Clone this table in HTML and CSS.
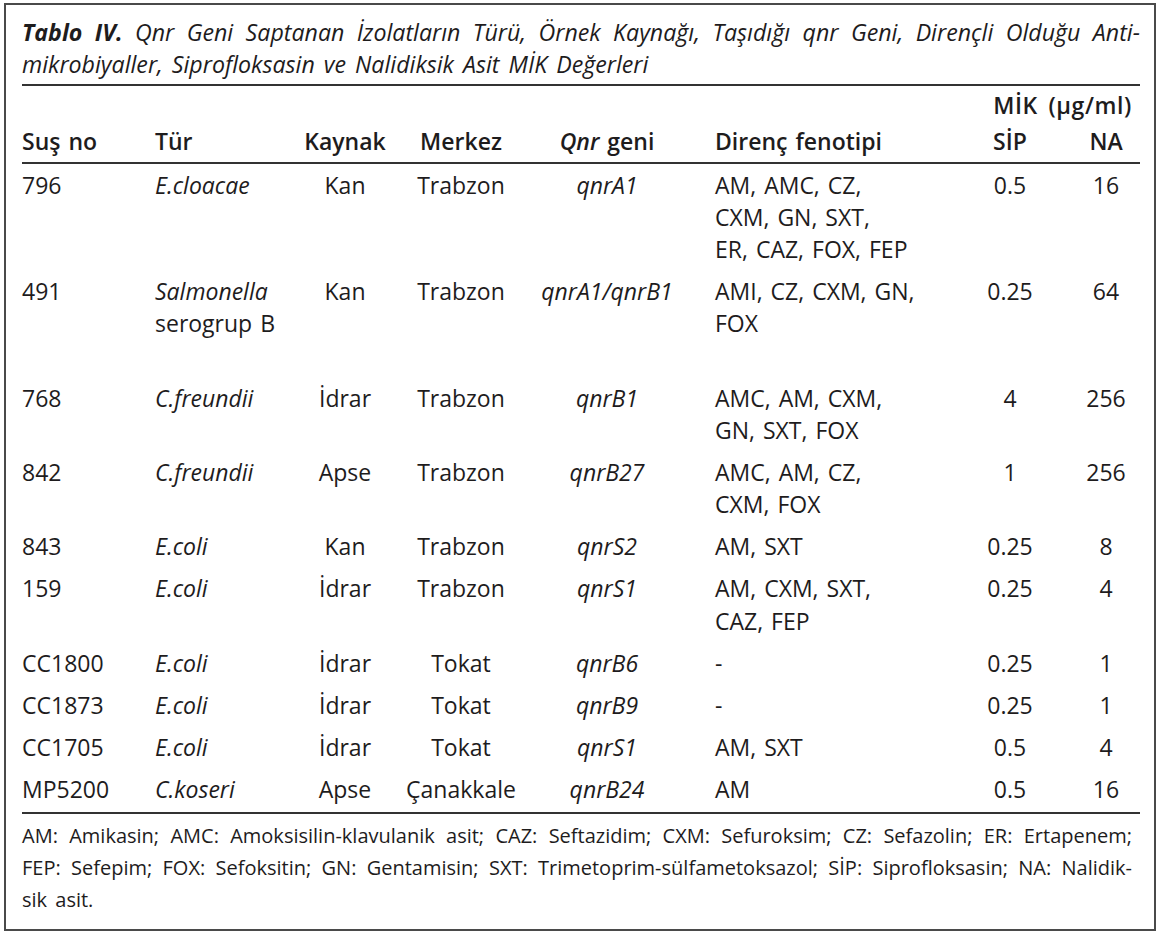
FILE: index.html
```html
<!DOCTYPE html>
<html lang="tr">
<head>
<meta charset="utf-8">
<title>Tablo IV</title>
<link rel="stylesheet" href="styles.css">
</head>
<body>
<div class="frame">
  <div class="caption">
    <span class="cline just"><b>Tablo IV.</b> Qnr Geni Saptanan İzolatların Türü, Örnek Kaynağı, Taşıdığı qnr Geni, Dirençli Olduğu Anti-</span>
    <span class="cline">mikrobiyaller, Siprofloksasin ve Nalidiksik Asit MİK Değerleri</span>
  </div>
  <table class="data">
    <colgroup>
      <col class="c1"><col class="c2"><col class="c3"><col class="c4"><col class="c5"><col class="c6"><col class="c7"><col class="c8">
    </colgroup>
    <thead>
      <tr class="h1">
        <th colspan="6"></th>
        <th colspan="2" class="mik">MİK (μg/ml)</th>
      </tr>
      <tr class="h2">
        <th class="l">Suş no</th>
        <th class="l">Tür</th>
        <th>Kaynak</th>
        <th>Merkez</th>
        <th><i>Qnr</i> geni</th>
        <th class="l ind">Direnç fenotipi</th>
        <th>SİP</th>
        <th>NA</th>
      </tr>
    </thead>
    <tbody>
      <tr>
        <td class="l">796</td><td class="l"><i>E.cloacae</i></td><td>Kan</td><td>Trabzon</td><td><i>qnrA1</i></td>
        <td class="l ind">AM, AMC, CZ,<br>CXM, GN, SXT,<br>ER, CAZ, FOX, FEP</td><td>0.5</td><td>16</td>
      </tr>
      <tr class="tall">
        <td class="l">491</td><td class="l"><i>Salmonella</i><br>serogrup B</td><td>Kan</td><td>Trabzon</td><td><i>qnrA1/qnrB1</i></td>
        <td class="l ind">AMI, CZ, CXM, GN,<br>FOX</td><td>0.25</td><td>64</td>
      </tr>
      <tr>
        <td class="l">768</td><td class="l"><i>C.freundii</i></td><td>İdrar</td><td>Trabzon</td><td><i>qnrB1</i></td>
        <td class="l ind">AMC, AM, CXM,<br>GN, SXT, FOX</td><td>4</td><td>256</td>
      </tr>
      <tr>
        <td class="l">842</td><td class="l"><i>C.freundii</i></td><td>Apse</td><td>Trabzon</td><td><i>qnrB27</i></td>
        <td class="l ind">AMC, AM, CZ,<br>CXM, FOX</td><td>1</td><td>256</td>
      </tr>
      <tr>
        <td class="l">843</td><td class="l"><i>E.coli</i></td><td>Kan</td><td>Trabzon</td><td><i>qnrS2</i></td>
        <td class="l ind">AM, SXT</td><td>0.25</td><td>8</td>
      </tr>
      <tr>
        <td class="l">159</td><td class="l"><i>E.coli</i></td><td>İdrar</td><td>Trabzon</td><td><i>qnrS1</i></td>
        <td class="l ind">AM, CXM, SXT,<br>CAZ, FEP</td><td>0.25</td><td>4</td>
      </tr>
      <tr>
        <td class="l">CC1800</td><td class="l"><i>E.coli</i></td><td>İdrar</td><td>Tokat</td><td><i>qnrB6</i></td>
        <td class="l ind">-</td><td>0.25</td><td>1</td>
      </tr>
      <tr>
        <td class="l">CC1873</td><td class="l"><i>E.coli</i></td><td>İdrar</td><td>Tokat</td><td><i>qnrB9</i></td>
        <td class="l ind">-</td><td>0.25</td><td>1</td>
      </tr>
      <tr>
        <td class="l">CC1705</td><td class="l"><i>E.coli</i></td><td>İdrar</td><td>Tokat</td><td><i>qnrS1</i></td>
        <td class="l ind">AM, SXT</td><td>0.5</td><td>4</td>
      </tr>
      <tr class="last">
        <td class="l">MP5200</td><td class="l"><i>C.koseri</i></td><td>Apse</td><td>Çanakkale</td><td><i>qnrB24</i></td>
        <td class="l ind">AM</td><td>0.5</td><td>16</td>
      </tr>
    </tbody>
  </table>
  <div class="notes">
    <span class="nline just">AM: Amikasin; AMC: Amoksisilin-klavulanik asit; CAZ: Seftazidim; CXM: Sefuroksim; CZ: Sefazolin; ER: Ertapenem;</span>
    <span class="nline just">FEP: Sefepim; FOX: Sefoksitin; GN: Gentamisin; SXT: Trimetoprim-sülfametoksazol; SİP: Siprofloksasin; NA: Nalidik-</span>
    <span class="nline">sik asit.</span>
  </div>
</div>
</body>
</html>
```

FILE: styles.css
```css
* { box-sizing: border-box; }
html, body { margin: 0; padding: 0; background: #ffffff; }
body {
  font-family: "Open Sans", "Noto Sans", "DejaVu Sans", sans-serif;
  color: #1e1c1d;
}
.frame {
  margin: 3px 4px 0 4px;
  width: 1152px;
  border: 2px solid #4a4a4a;
  padding: 11px 14px 13px 16px;
}
.caption {
  font-style: italic;
  font-size: 23.2px;
  line-height: 32px;
  word-spacing: 3px;
  white-space: nowrap;
}
.caption b { font-weight: 700; }
.cline, .nline { display: block; }
.just { text-align: justify; text-align-last: justify; }

.data {
  width: 1118px;
  border-collapse: collapse;
  margin-top: 4px;
  font-size: 23px;
  line-height: 32.3px;
  word-spacing: 2px;
  border-top: 2px solid #333;
  border-bottom: 2px solid #333;
}
.c1 { width: 133px; }
.c2 { width: 145px; }
.c3 { width: 90px; }
.c4 { width: 142px; }
.c5 { width: 150px; }
.c6 { width: 266px; }
.c7 { width: 124px; }
.c8 { width: 68px; }

.data th, .data td {
  padding: 5px 0 4.7px 0;
  text-align: center;
  vertical-align: top;
  white-space: nowrap;
}
.data th { font-weight: 600; }
.data th i { font-weight: 600; }
.data .l { text-align: left; }
.data .ind { padding-left: 33px; }
.h1 th { padding: 3px 0 2px 0; }
.h1 .mik { text-align: right; padding-right: 8px; letter-spacing: 0.6px; word-spacing: 4px; }
.h2 th { padding: 2px 0 4px 0; border-bottom: 2px solid #333; }
.tall td { padding-bottom: 37px; }
.last td { padding-bottom: 6.7px; }

.notes {
  margin-top: 6px;
  font-size: 20px;
  line-height: 32px;
  word-spacing: 3px;
  padding-right: 8px;
}
```
